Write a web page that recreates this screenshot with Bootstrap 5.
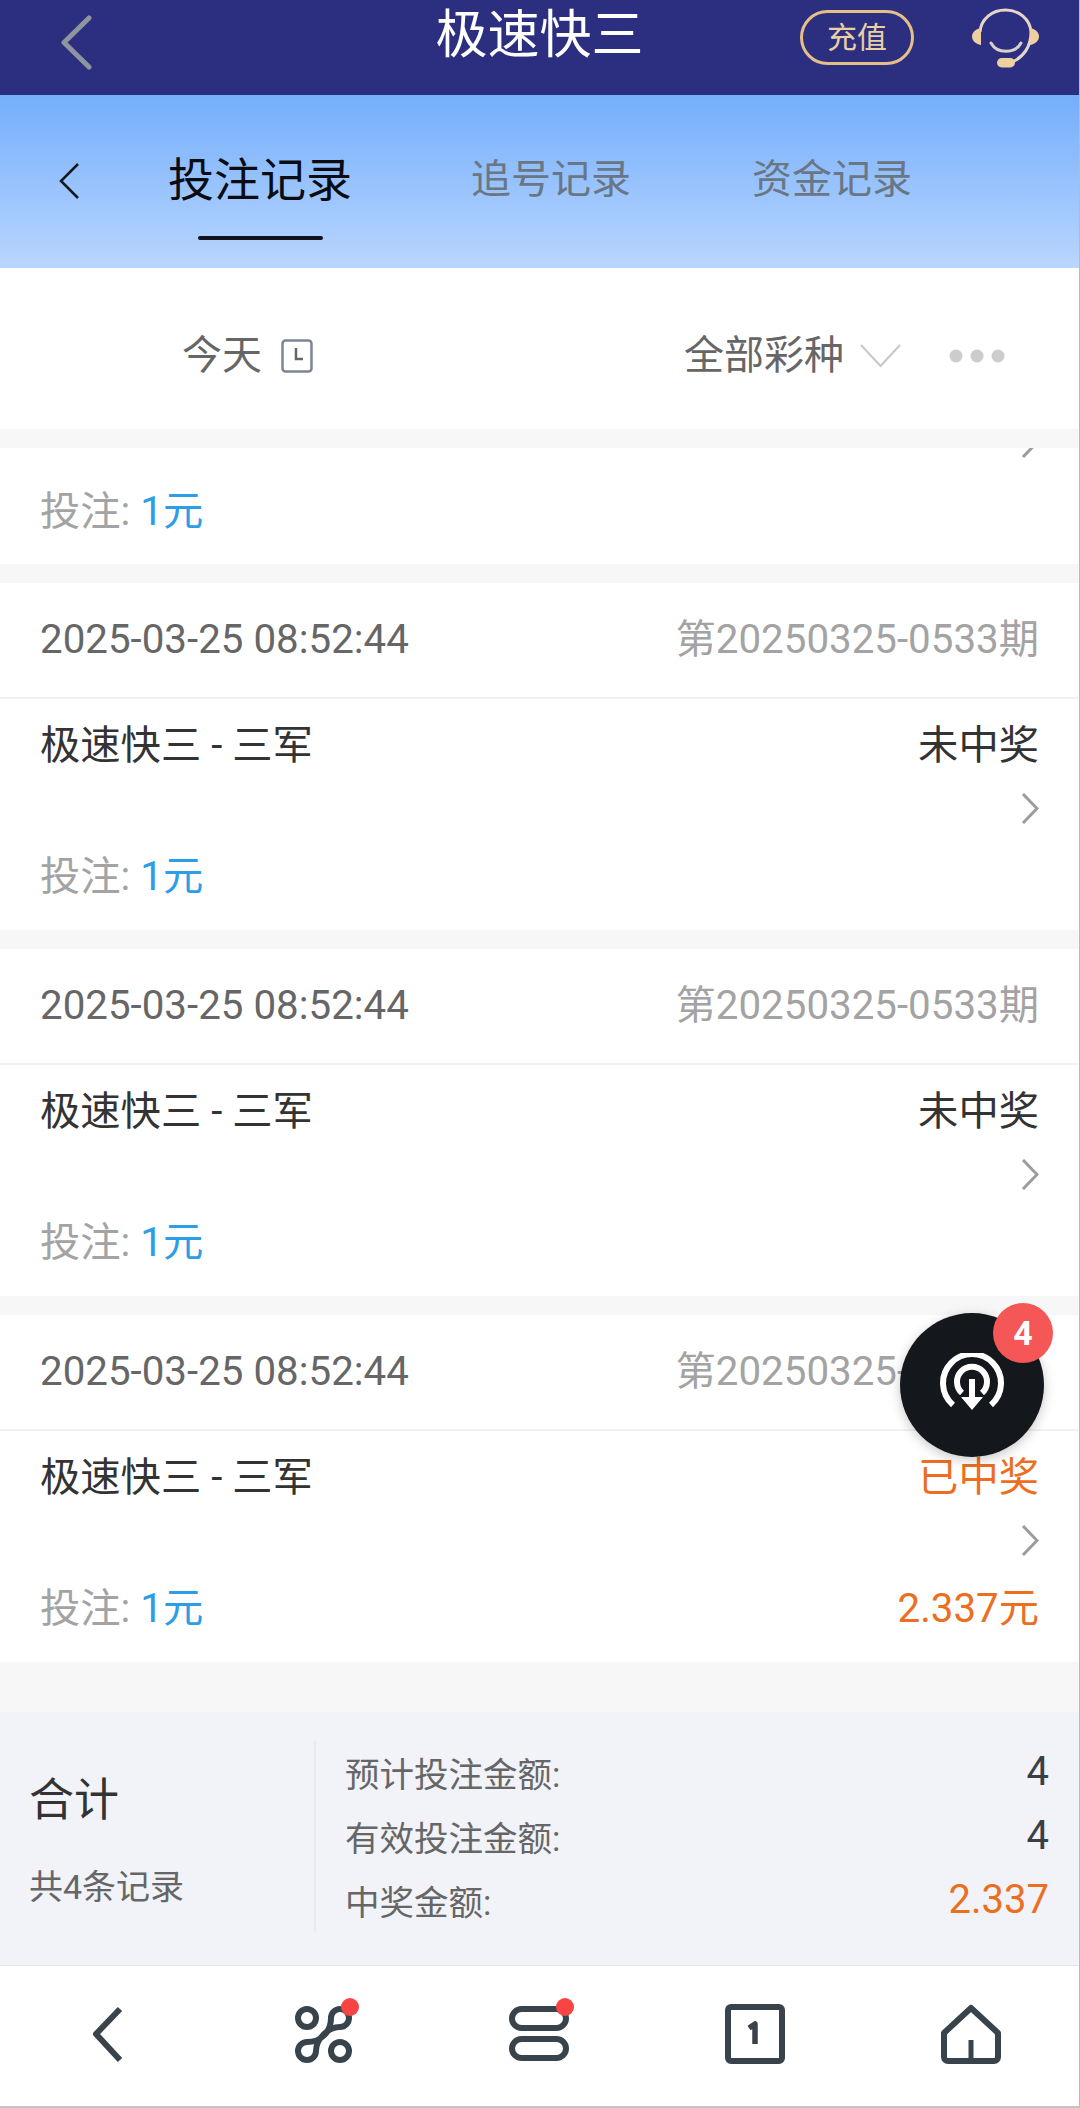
<!DOCTYPE html>
<html lang="zh">
<head>
    <meta charset="UTF-8">
    <title>极速快三</title>
    <link href="https://cdn.jsdelivr.net/npm/bootstrap@5.3.0/dist/css/bootstrap.min.css" rel="stylesheet">
    <style>
        html, body { margin: 0; height: 2108px; overflow: hidden; }
        body { font-family: Roboto, "Noto Sans CJK SC", sans-serif; background: #f7f7f7; color: #333; }
        .app-shell { width: 1080px; height: 2108px; border-right: 1px solid #bbb; border-bottom: 2px solid #c4c4c4; }

        .top-bar { height: 95px; background: #2c2f80; padding: 0 40px 0 60px; }
        .top-title { color: #fff; font-size: 52px; line-height: 72px; left: 0; right: 0; top: 0; text-align: center; }
        .topup-pill { width: 114px; height: 55px; margin-top: 10px; border: 3px solid #e5bf85; border-radius: 28px; color: #e9cfa3; font-size: 30px; line-height: 49px; text-align: center; margin-left: auto; }
        .headset { margin: 8px 0 0 58px; }
        .back-top { margin-top: 15px; }

        .tab-bar { height: 173px; background: linear-gradient(#74aefc, #b9d6fe); padding-left: 59px; }
        .tab-back { margin-top: 68px; margin-right: 89px; }
        .tab-item { font-size: 40px; line-height: 56px; margin-top: 57px; color: #6a7684; }
        .tab-item.tab-on { font-size: 46px; color: #0b0b12; margin-right: 119px; }
        .tab-mid { margin-right: 121px; }
        .tab-line { width: 125px; height: 4px; background: #11141c; border-radius: 2px; margin: 28px auto 0; }

        .filter-bar { height: 161px; background: #fff; color: #666; font-size: 40px; padding-top: 15px; }
        .filter-day { margin-left: 182px; line-height: 56px; gap: 19px; }
        .filter-kind { margin-left: 371px; line-height: 56px; }

        .rec-list { padding-top: 19px; gap: 19px; }
        .rec-card { background: #fff; font-size: 40.300px; padding: 0 40px; }
        .rec-head { height: 116px; margin: 0 -40px; padding: 0 40px; border-bottom: 2px solid #f1f1f1; color: #666; }
        .rec-issue { color: #a3a3a3; }
        .rec-row { line-height: 56px; }
        .rec-chev { height: 31px; margin: 19px 0 25px; }
        .rec-body { padding: 19px 0 25px; }
        .bet-label { color: #a3a3a3; }
        .bet-money { color: #2d9de5; }
        .txt-win { color: #ec6e1f; }
        .rec-cut { height: 116px; }
        .rec-cut .rec-row { margin-top: 26px; }

        .sum-box { height: 253px; background: #f1f3f9; padding: 29px 0 33px; flex-shrink: 0; }
        .sum-left { width: 316px; padding-left: 29px; border-right: 2px solid #e9eaef; }
        .sum-title { font-size: 45px; line-height: 60px; margin-top: 30px; color: #333; }
        .sum-count { font-size: 34px; line-height: 48px; margin-top: 32px; color: #666; }
        .sum-right { padding: 3px 30px 0 29px; }
        .sum-row { height: 64px; }
        .sum-label { font-size: 34.500px; color: #666; }
        .sum-val { font-size: 40px; margin-bottom: 8px; color: #3a3f45; }
        .sum-val.txt-win { color: #ec6e1f; }

        .foot-bar { height: 141px; background: #fff; border-top: 1px solid #e4e4e4; flex-shrink: 0; }
        .foot-cell { width: 216px; padding-top: 38px; }
        .foot-ico { overflow: visible; margin-top: 2px; }

        .fab-btn { width: 144px; height: 144px; left: 900px; top: 1313px; background: #14171c; box-shadow: 0 3px 12px rgba(0,0,0,.22); }
        .fab-count { width: 60px; height: 60px; left: 93px; top: -10px; background: #f55656; color: #fff; font-size: 34px; font-weight: 700; line-height: 60px; text-align: center; }
    </style>
</head>
<body>
<div class="app-shell position-relative d-flex flex-column overflow-hidden">

    <!-- barra superior -->
    <div class="top-bar position-relative d-flex flex-shrink-0">
        <div class="top-title position-absolute">极速快三</div>
        <svg class="back-top" width="32" height="55" viewBox="0 0 32 55" fill="none"><path d="M29 3 4 27.5 29 52" stroke="#8e959e" stroke-width="5" stroke-linecap="round" stroke-linejoin="round"/></svg>
        <div class="topup-pill position-relative">充值</div>
        <svg class="headset flex-shrink-0" width="67" height="60" viewBox="0 0 67 60" fill="none">
            <path d="M8 24C9 11 20 2 33.500 2S58 11 59 24C59 38 52 49 40 54" stroke="#e4d6cb" stroke-width="3"/>
            <path d="M19 35c6 11 24 11 30 0" stroke="#d8cfc9" stroke-width="3" stroke-linecap="round"/>
            <path d="M9 20v17C3 36 0 32 0 28.500S3 21 9 20zM58 20v17c6-1 9-5 9-8.500S64 21 58 20z" fill="#eed0a0"/>
            <rect x="25" y="50" width="18" height="9.500" rx="4.700" fill="#eed0a0"/>
        </svg>
    </div>

    <!-- abas -->
    <div class="tab-bar d-flex flex-shrink-0">
        <svg class="tab-back flex-shrink-0" width="20" height="36" viewBox="0 0 20 36" fill="none"><path d="M19 1 2 18l17 17" stroke="#16181f" stroke-width="2.500"/></svg>
        <div class="tab-item tab-on">投注记录<div class="tab-line"></div></div>
        <div class="tab-item tab-mid">追号记录</div>
        <div class="tab-item">资金记录</div>
    </div>

    <!-- filtros -->
    <div class="filter-bar d-flex flex-shrink-0">
        <div class="filter-day d-flex align-items-center">今天
            <svg width="32" height="34" viewBox="0 0 32 34" fill="none"><rect x="1.500" y="1.500" width="29" height="31" rx="3" stroke="#7d8494" stroke-width="2.500"/><path d="M15 9v11h7" stroke="#666" stroke-width="2.500"/></svg>
        </div>
        <div class="filter-kind d-flex align-items-center">全部彩种
            <svg class="ms-3" width="41" height="24" viewBox="0 0 41 24" fill="none"><path d="M1 1l19.500 21L40 1" stroke="#c8c8c8" stroke-width="2"/></svg>
            <svg class="ms-5" width="56" height="14" viewBox="0 0 56 14" fill="#cccccc"><circle cx="7" cy="7" r="6.500"/><circle cx="28" cy="7" r="6.500"/><circle cx="49" cy="7" r="6.500"/></svg>
        </div>
    </div>

    <!-- lista de apostas -->
    <div class="rec-list d-flex flex-column flex-grow-1 overflow-hidden">
        <div class="rec-card rec-cut flex-shrink-0">
            <div class="d-flex justify-content-end"><svg class="d-block" width="18" height="10" viewBox="0 21 18 10" fill="none"><path d="M2 1l14 14.500L2 30" stroke="#9c9c9c" stroke-width="3"/></svg></div>
            <div class="rec-row"><span class="bet-label">投注: </span><span class="bet-money">1元</span></div>
        </div>

        <div class="rec-card flex-shrink-0">
            <div class="rec-head d-flex justify-content-between align-items-center"><span>2025-03-25 08:52:44</span><span class="rec-issue">第20250325-0533期</span></div>
            <div class="rec-body">
                <div class="rec-row d-flex justify-content-between"><span>极速快三 - 三军</span><span>未中奖</span></div>
                <div class="rec-chev d-flex justify-content-end"><svg width="18" height="31" viewBox="0 0 18 31" fill="none"><path d="M2 1l14 14.500L2 30" stroke="#9c9c9c" stroke-width="3"/></svg></div>
                <div class="rec-row"><span class="bet-label">投注: </span><span class="bet-money">1元</span></div>
            </div>
        </div>

        <div class="rec-card flex-shrink-0">
            <div class="rec-head d-flex justify-content-between align-items-center"><span>2025-03-25 08:52:44</span><span class="rec-issue">第20250325-0533期</span></div>
            <div class="rec-body">
                <div class="rec-row d-flex justify-content-between"><span>极速快三 - 三军</span><span>未中奖</span></div>
                <div class="rec-chev d-flex justify-content-end"><svg width="18" height="31" viewBox="0 0 18 31" fill="none"><path d="M2 1l14 14.500L2 30" stroke="#9c9c9c" stroke-width="3"/></svg></div>
                <div class="rec-row"><span class="bet-label">投注: </span><span class="bet-money">1元</span></div>
            </div>
        </div>

        <div class="rec-card flex-shrink-0">
            <div class="rec-head d-flex justify-content-between align-items-center"><span>2025-03-25 08:52:44</span><span class="rec-issue">第20250325-0533期</span></div>
            <div class="rec-body">
                <div class="rec-row d-flex justify-content-between"><span>极速快三 - 三军</span><span class="txt-win">已中奖</span></div>
                <div class="rec-chev d-flex justify-content-end"><svg width="18" height="31" viewBox="0 0 18 31" fill="none"><path d="M2 1l14 14.500L2 30" stroke="#9c9c9c" stroke-width="3"/></svg></div>
                <div class="rec-row d-flex justify-content-between"><span><span class="bet-label">投注: </span><span class="bet-money">1元</span></span><span class="txt-win">2.337元</span></div>
            </div>
        </div>
    </div>

    <!-- resumo -->
    <div class="sum-box d-flex">
        <div class="sum-left flex-shrink-0">
            <div class="sum-title">合计</div>
            <div class="sum-count">共4条记录</div>
        </div>
        <div class="sum-right flex-grow-1">
            <div class="sum-row d-flex justify-content-between align-items-center"><span class="sum-label">预计投注金额:</span><span class="sum-val">4</span></div>
            <div class="sum-row d-flex justify-content-between align-items-center"><span class="sum-label">有效投注金额:</span><span class="sum-val">4</span></div>
            <div class="sum-row d-flex justify-content-between align-items-center"><span class="sum-label">中奖金额:</span><span class="sum-val txt-win">2.337</span></div>
        </div>
    </div>

    <!-- navegação -->
    <div class="foot-bar d-flex">
        <div class="foot-cell d-flex justify-content-center">
            <svg width="60" height="60" viewBox="0 0 60 60" fill="none"><path d="M42 5 18 30l24 26" stroke="#38434b" stroke-width="6" stroke-linejoin="round"/></svg>
        </div>
        <div class="foot-cell d-flex justify-content-center">
            <svg class="foot-ico" width="57" height="57" viewBox="0 0 57 57" fill="none" stroke="#38434b" stroke-width="6">
                <circle cx="12" cy="12" r="9"/><circle cx="45" cy="45" r="9"/>
                <path d="M36 12A9 9 0 1 1 45 21C33 21 21 33 21 45A9 9 0 1 1 12 36C26 36 36 26 36 12z"/>
                <circle cx="55" cy="1" r="9" fill="#f94444" stroke="none"/>
            </svg>
        </div>
        <div class="foot-cell d-flex justify-content-center">
            <svg class="foot-ico" width="60" height="55" viewBox="0 0 60 55" fill="none" stroke="#38434b" stroke-width="6">
                <rect x="3" y="3" width="54" height="19" rx="9.500"/><rect x="3" y="33" width="54" height="19" rx="9.500"/>
                <circle cx="56" cy="1" r="9" fill="#f94444" stroke="none"/>
            </svg>
        </div>
        <div class="foot-cell d-flex justify-content-center">
            <svg width="60" height="60" viewBox="0 0 60 60" fill="none"><rect x="3" y="3" width="54" height="54" rx="3" stroke="#38434b" stroke-width="6"/><path d="M24 24l6-4v20" stroke="#38434b" stroke-width="5.500" stroke-linejoin="round"/></svg>
        </div>
        <div class="foot-cell d-flex justify-content-center">
            <svg width="60" height="60" viewBox="0 0 60 60" fill="none"><path d="M30 4 57 29v24a4 4 0 0 1-4 4H7a4 4 0 0 1-4-4V29z" stroke="#38434b" stroke-width="6" stroke-linejoin="round"/><path d="M30 36v21" stroke="#38434b" stroke-width="5"/></svg>
        </div>
    </div>

    <!-- botão flutuante -->
    <div class="fab-btn position-absolute rounded-circle d-flex align-items-center justify-content-center">
        <svg width="66" height="64" viewBox="0 0 66 64" fill="none" stroke="#fff" stroke-linecap="butt">
            <path d="M14 52A29 29 0 1 1 52 52" stroke-width="6"/>
            <path d="M23 40A15 15 0 1 1 43 40" stroke-width="6"/>
            <path d="M33 26v22" stroke-width="6"/>
            <path d="M22 44h22L33 57z" fill="#fff" stroke="none"/>
        </svg>
        <div class="fab-count position-absolute rounded-circle">4</div>
    </div>
</div>
<script src="https://cdn.jsdelivr.net/npm/bootstrap@5.3.0/dist/js/bootstrap.bundle.min.js"></script>
</body>
</html>
